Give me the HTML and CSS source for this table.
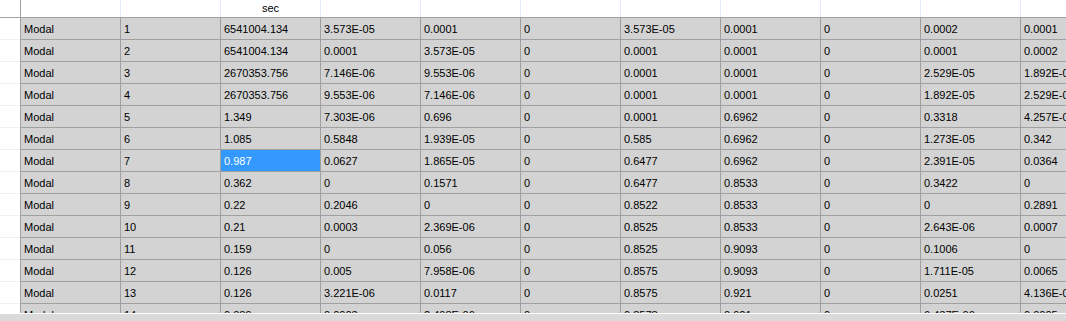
FILE: index.html
```html
<!DOCTYPE html>
<html>
<head>
<meta charset="utf-8">
<link rel="stylesheet" href="styles.css">
</head>
<body>
<div class="window">
  <div class="grid" id="grid">
    <div class="row header">
      <div class="gutter"></div>
      <div class="hcell first"></div>
      <div class="hcell"></div>
      <div class="hcell center">sec</div>
      <div class="hcell"></div>
      <div class="hcell"></div>
      <div class="hcell"></div>
      <div class="hcell"></div>
      <div class="hcell"></div>
      <div class="hcell"></div>
      <div class="hcell"></div>
      <div class="hcell"></div>
    </div>
  </div>
  <div class="sep"></div>
  <div class="hscroll"></div>
</div>
<script src="app.js"></script>
</body>
</html>
```

FILE: app.js
```js
var rows = [
["Modal","1","6541004.134","3.573E-05","0.0001","0","3.573E-05","0.0001","0","0.0002","0.0001"],
["Modal","2","6541004.134","0.0001","3.573E-05","0","0.0001","0.0001","0","0.0001","0.0002"],
["Modal","3","2670353.756","7.146E-06","9.553E-06","0","0.0001","0.0001","0","2.529E-05","1.892E-05"],
["Modal","4","2670353.756","9.553E-06","7.146E-06","0","0.0001","0.0001","0","1.892E-05","2.529E-05"],
["Modal","5","1.349","7.303E-06","0.696","0","0.0001","0.6962","0","0.3318","4.257E-05"],
["Modal","6","1.085","0.5848","1.939E-05","0","0.585","0.6962","0","1.273E-05","0.342"],
["Modal","7","0.987","0.0627","1.865E-05","0","0.6477","0.6962","0","2.391E-05","0.0364"],
["Modal","8","0.362","0","0.1571","0","0.6477","0.8533","0","0.3422","0"],
["Modal","9","0.22","0.2046","0","0","0.8522","0.8533","0","0","0.2891"],
["Modal","10","0.21","0.0003","2.369E-06","0","0.8525","0.8533","0","2.643E-06","0.0007"],
["Modal","11","0.159","0","0.056","0","0.8525","0.9093","0","0.1006","0"],
["Modal","12","0.126","0.005","7.958E-06","0","0.8575","0.9093","0","1.711E-05","0.0065"],
["Modal","13","0.126","3.221E-06","0.0117","0","0.8575","0.921","0","0.0251","4.136E-05"],
["Modal","14","0.089","0.0003","2.498E-06","0","0.8578","0.921","0","6.437E-06","0.0005"]
];
var grid = document.getElementById("grid");
rows.forEach(function (r, ri) {
  var row = document.createElement("div");
  row.className = "row data";
  var g = document.createElement("div");
  g.className = "gutter";
  row.appendChild(g);
  r.forEach(function (v, ci) {
    var c = document.createElement("div");
    c.className = "cell";
    if (ri === 6 && ci === 2) c.className += " selected";
    c.textContent = v;
    row.appendChild(c);
  });
  grid.appendChild(row);
});
```

FILE: styles.css
```css
html, body {
  margin: 0;
  padding: 0;
  background: #ffffff;
}
.window {
  width: 1066px;
  height: 321px;
  overflow: hidden;
  display: flex;
  flex-direction: column;
  font-family: "Liberation Sans", Arial, sans-serif;
  font-size: 11px;
  color: #000000;
}
.grid {
  height: 313px;
  overflow: hidden;
  flex: none;
}
.row {
  display: flex;
  white-space: nowrap;
}
.header {
  height: 17px;
  border-bottom: 1px solid #a0a0a0;
}
.header .gutter {
  border-bottom: none;
}
.gutter {
  width: 20px;
  flex: none;
  background: #ffffff;
  box-sizing: border-box;
  border-bottom: 1px solid #eef2f8;
}
.hcell {
  width: 100px;
  flex: none;
  box-sizing: border-box;
  border-left: 1px solid #e3ecfa;
  background: #ffffff;
  line-height: 17px;
  padding-left: 3px;
}
.hcell.first {
  border-left: 1px solid #a0a0a0;
}
.hcell.center {
  text-align: center;
  padding-left: 0;
}
.data {
  height: 22px;
}
.cell {
  width: 100px;
  flex: none;
  box-sizing: border-box;
  border-left: 1px solid #a0a0a0;
  border-bottom: 1px solid #a0a0a0;
  background: #d3d3d3;
  padding-left: 3px;
  padding-top: 1px;
  line-height: 20px;
  overflow: hidden;
}
.cell.selected {
  background: #3399ff;
  color: #ffffff;
}
.sep {
  height: 1px;
  background: #ffffff;
  flex: none;
}
.hscroll {
  flex: 1;
  background: #dadada;
}
```
